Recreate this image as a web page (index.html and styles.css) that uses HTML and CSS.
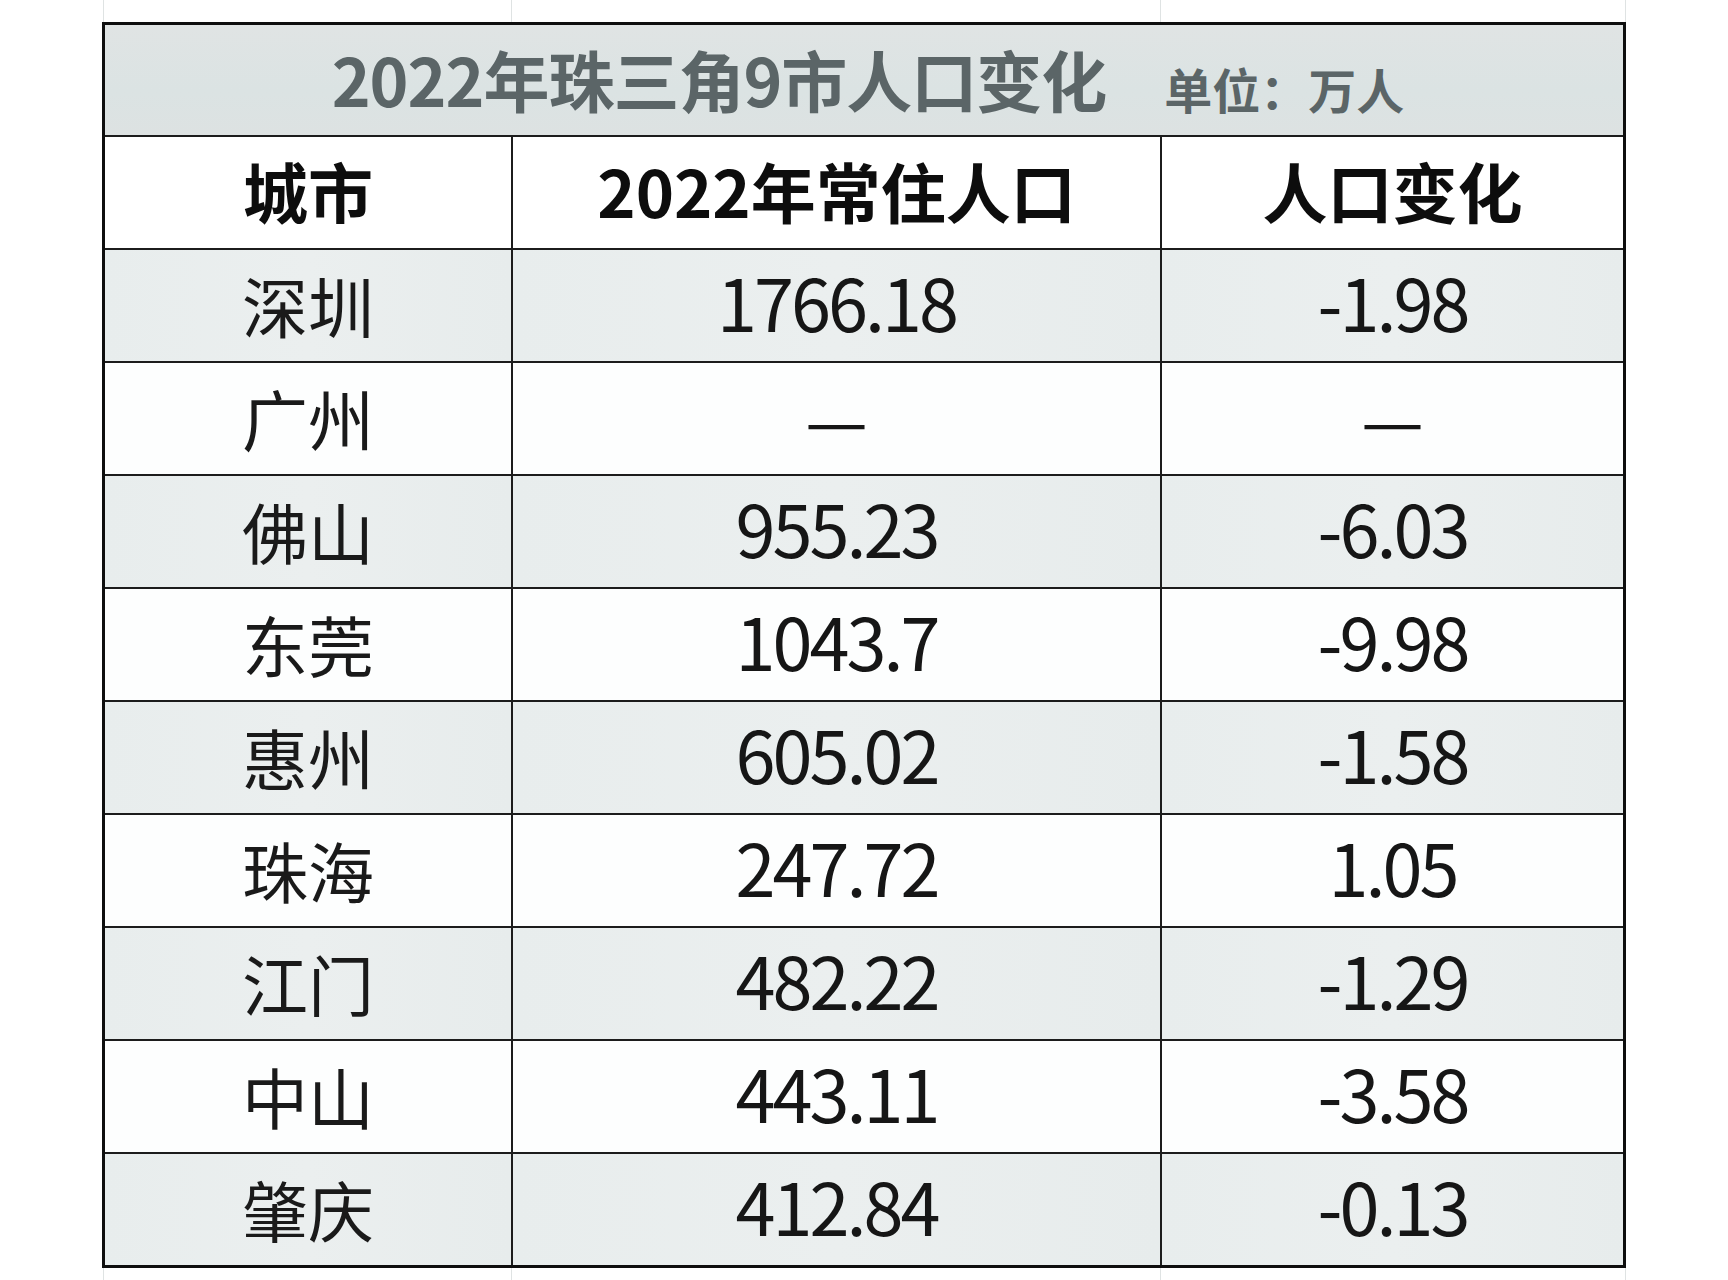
FILE: index.html
```html
<!DOCTYPE html>
<html lang="zh-CN">
<head>
<meta charset="utf-8">
<title>2022年珠三角9市人口变化</title>
<link rel="stylesheet" href="styles.css">
</head>
<body>
<div class="sheet">
  <div class="grid">
    <div class="title"><span class="title-line"><span class="title-main">2022年珠三角9市人口变化</span><span class="unit">单位：万人</span></span></div>

    <div class="cell head">城市</div>
    <div class="cell head">2022年常住人口</div>
    <div class="cell head">人口变化</div>

    <div class="cell city shade">深圳</div><div class="cell num shade">1766.18</div><div class="cell num shade">-1.98</div>
    <div class="cell city">广州</div><div class="cell num dash">—</div><div class="cell num dash">—</div>
    <div class="cell city shade">佛山</div><div class="cell num shade">955.23</div><div class="cell num shade">-6.03</div>
    <div class="cell city">东莞</div><div class="cell num">1043.7</div><div class="cell num">-9.98</div>
    <div class="cell city shade">惠州</div><div class="cell num shade">605.02</div><div class="cell num shade">-1.58</div>
    <div class="cell city">珠海</div><div class="cell num">247.72</div><div class="cell num">1.05</div>
    <div class="cell city shade">江门</div><div class="cell num shade">482.22</div><div class="cell num shade">-1.29</div>
    <div class="cell city">中山</div><div class="cell num">443.11</div><div class="cell num">-3.58</div>
    <div class="cell city shade">肇庆</div><div class="cell num shade">412.84</div><div class="cell num shade">-0.13</div>
  </div>
</div>
</body>
</html>
```

FILE: styles.css
```css
html, body {
  margin: 0;
  padding: 0;
  background: #ffffff;
}

body {
  font-family: "Noto Sans CJK SC", "Noto Sans", sans-serif;
  color: #141414;
}

/* faint spreadsheet gridlines peeking out above and below the table */
.sheet {
  padding: 22px 0 12px 102px;
  background-image:
    linear-gradient(90deg, transparent 103px, #dfe3e3 103px, #dfe3e3 104px, transparent 104px),
    linear-gradient(90deg, transparent 511px, #dfe3e3 511px, #dfe3e3 512px, transparent 512px),
    linear-gradient(90deg, transparent 1160px, #dfe3e3 1160px, #dfe3e3 1161px, transparent 1161px),
    linear-gradient(90deg, transparent 1625px, #dfe3e3 1625px, #dfe3e3 1626px, transparent 1626px);
}

.grid {
  display: grid;
  grid-template-columns: 406px 647px 461px;
  grid-template-rows: 110px repeat(10, 111px);
  gap: 2px;
  width: max-content;
  background: #1c1c1c;
  border: 3px solid #0e0e0e;
}

.title {
  grid-column: 1 / -1;
  display: flex;
  align-items: center;
  justify-content: center;
  padding-bottom: 4px;
  background: linear-gradient(180deg, #e0e4e4 0%, #dbe3e3 60%, #dde2e2 100%);
  color: #5b6567;
  font-weight: 700;
}

.title-line {
  line-height: 1;
  padding-left: 8px;
}

.title-main {
  font-size: 66px;
  letter-spacing: -1px;
}

.unit {
  font-size: 48px;
  margin-left: 58px;
  position: relative;
  top: 2px;
}

.cell {
  display: flex;
  align-items: center;
  justify-content: center;
  background: #fdfefe;
  line-height: 1;
}

.shade {
  background: linear-gradient(90deg, #e8eded 0%, #ebefef 50%, #e7ecec 100%);
}

.head {
  font-size: 65px;
  font-weight: 700;
  color: #0d0d0d;
  background: #ffffff;
  padding-bottom: 4px;
}

.city {
  font-size: 66px;
  font-weight: 400;
  color: #1a1a1a;
  padding-bottom: 4px;
}

.num {
  font-size: 72px;
  font-weight: 400;
  letter-spacing: -3px;
  color: #161616;
  padding-bottom: 10px;
}

.dash {
  letter-spacing: 0;
  font-size: 70px;
  padding-bottom: 4px;
}
```
